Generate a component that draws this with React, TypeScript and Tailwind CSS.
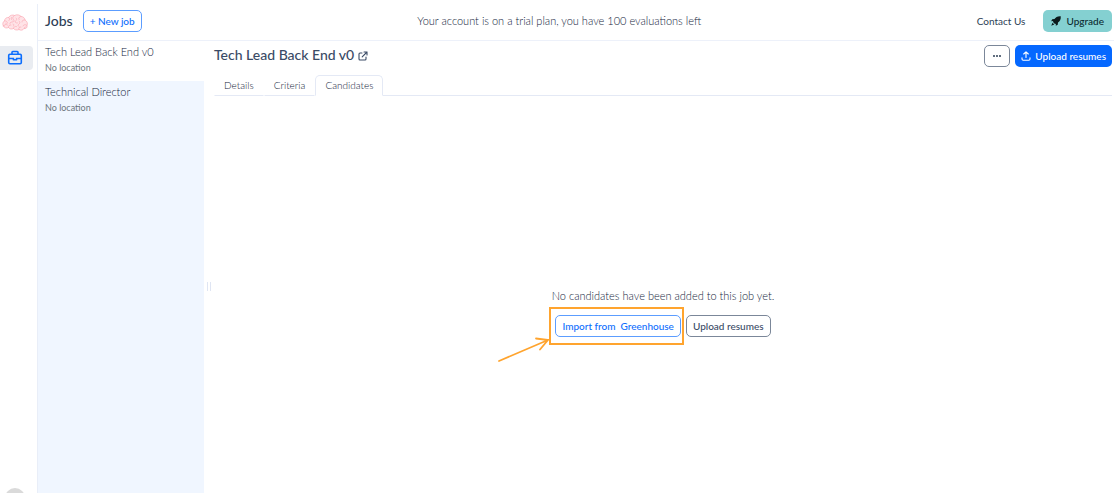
import { useState } from "react";

const jobs = [
    { id: 1, title: "Tech Lead Back End v0", location: "No location" },
    { id: 2, title: "Technical Director", location: "No location" },
];

const tabs = ["Details", "Criteria", "Candidates"];

function BrainLogo() {
    return (
        <svg viewBox="0 0 52 34" className="h-[17px] w-[26px]" fill="#ffe3e7" stroke="#fba9b4" strokeWidth="1.3" strokeLinecap="round" strokeLinejoin="round">
            <path d="M3 24C0 20 2 15 5 14C5 9 10 6 13 7C16 2 22 1 25 3C30 0 36 2 38 5C43 5 46 9 46 12C50 14 52 19 50 23C51 28 47 30 44 29C42 33 37 33 34 31C30 33 25 32 23 29C19 31 15 30 13 27C9 29 4 28 3 24Z" />
            <path fill="none" d="M5 14C8 13 11 15 11 18M13 7C16 8 16 11 14 13M3 24C5 21 8 20 11 22M13 27C12 24 15 21 18 22M25 3C22 5 20 8 23 11C25 13 24 16 20 16C17 16 15 18 16 20M38 5C35 5 32 8 34 11M28 8C31 10 29 13 27 14C25 16 28 19 31 18M46 12C43 11 39 13 40 16M50 23C47 20 43 21 42 24M34 31C32 28 35 25 38 26M23 29C23 26 26 24 29 25M34 14C37 16 36 19 33 21C31 22 32 24 34 25M44 29C44 27 46 26 47 26M19 7C18 9 18 11 20 12M8 18C9 18 9 19 8 20M22 20C24 20 24 22 23 24" />
        </svg>
    );
}

function BriefcaseIcon() {
    return (
        <svg viewBox="0 0 16 16" className="size-4" fill="none" stroke="#0d6efd" strokeWidth="1.6" strokeLinejoin="round">
            <rect x="1.7" y="4.2" width="12.6" height="9.6" rx="1.2" />
            <path d="M5 4V2.3Q5 1.5 5.8 1.5H10.2Q11 1.5 11 2.3V4M2 8.5H6.4M9.6 8.5H14M6.4 7.7V9.8H9.6V7.7" />
        </svg>
    );
}

function OpenIcon() {
    return (
        <svg viewBox="0 0 10 10" className="size-[10px]" fill="none" stroke="currentColor" strokeWidth="1.1" strokeLinecap="round" strokeLinejoin="round">
            <path d="M4 2H2Q1 2 1 3V8Q1 9 2 9H7Q8 9 8 8V6M6 1H9V4M9 1L4.2 5.8" />
        </svg>
    );
}

function RocketIcon() {
    return (
        <svg viewBox="0 0 20 20" className="size-[10px]" fill="#0b1a1c">
            <path d="M19.5.5C13 0 9.5 2.5 7 6L2.5 6.5L.3 10.5L4.5 10.2L4 12L8 16L9.8 15.5L9.5 19.7L13.5 17.5L14 13C17.5 10.5 20 7 19.5.5Z" />
            <path d="M3 13.5L.5 19.5L6.5 17Z" />
        </svg>
    );
}

function UploadIcon() {
    return (
        <svg viewBox="0 0 10 10" className="size-[10px]" fill="none" stroke="currentColor" strokeWidth="1.1" strokeLinecap="round" strokeLinejoin="round">
            <path d="M5 6.5V1M2.7 3L5 .8L7.3 3M1 6.8V8Q1 9.2 2.2 9.2H7.8Q9 9.2 9 8V6.8" />
        </svg>
    );
}

export default function App() {
    const [activeJob, setActiveJob] = useState(1);
    const [activeTab, setActiveTab] = useState("Candidates");

    return (
        <div className="flex h-screen overflow-hidden bg-white font-['Lato',sans-serif] text-[11px] text-[#14243c]">
            {/* Icon rail */}
            <aside className="flex w-[38px] shrink-0 flex-col pt-1">
                <div className="flex min-h-0 flex-1 flex-col border-r border-[#e9eef8]">
                    <a href="#" aria-label="Home" className="ml-[2px] mt-[10px]">
                        <BrainLogo />
                    </a>
                    <a href="#jobs" aria-label="Jobs" className="mr-1 mt-[15px] flex h-6 items-center rounded-r-[4px] bg-[#e9ecf1] pl-[7px]">
                        <BriefcaseIcon />
                    </a>
                    <div className="mt-auto h-[5px] overflow-hidden pl-[5px]">
                        <div className="size-5 rounded-full bg-[#dadada]" />
                    </div>
                </div>
            </aside>

            <div className="flex min-w-0 flex-1 flex-col">
                {/* Top bar */}
                <header className="flex h-[41px] shrink-0 items-center justify-between border-b border-[#edf1fa] pl-[7px] pr-[2px] pt-[2px]">
                    <div className="flex items-center gap-[10px]">
                        <h1 className="text-sm font-medium text-[#2c3e55]">Jobs</h1>
                        <button className="h-[22px] rounded-[5px] border border-[#5c9dff] px-[6px] text-[10px] font-medium text-[#0d6efd]">+ New job</button>
                    </div>
                    <p className="font-light">Your account is on a trial plan, you have 100 evaluations left</p>
                    <div className="flex items-center gap-[18px]">
                        <a href="#contact" className="text-[10px] text-[#2c3e55]">Contact Us</a>
                        <button className="flex h-[22px] items-center gap-[5px] rounded-[5px] bg-[#84d0d1] px-2 text-[10px] font-medium text-[#0b2a30]">
                            <RocketIcon />
                            Upgrade
                        </button>
                    </div>
                </header>

                <div className="flex min-h-0 flex-1">
                    {/* Job list */}
                    <nav className="w-[166px] shrink-0 bg-[#f0f6ff]">
                        {jobs.map((job) => (
                            <button
                                key={job.id}
                                onClick={() => setActiveJob(job.id)}
                                className={`block h-10 w-full px-[7px] pb-[2px] text-left ${activeJob === job.id ? "bg-white" : ""}`}
                            >
                                <span className="block text-[11px] font-light leading-4">{job.title}</span>
                                <span className="block text-[9px] leading-4 text-[#6c757d]">{job.location}</span>
                            </button>
                        ))}
                    </nav>

                    {/* Resize handle */}
                    <div className="flex w-[10px] shrink-0 items-center justify-center pt-[38px]">
                        <div className="h-[9px] w-1 border-x border-[#dfe5f3]" />
                    </div>

                    <main className="flex min-w-0 flex-1 flex-col pr-[2px]">
                        <div className="flex h-[30px] shrink-0 items-center justify-between">
                            <h2 className="flex items-center gap-[4px] pb-[2px] text-sm font-medium text-[#3a4b66]">
                                Tech Lead Back End v0
                                <a href="#open" aria-label="Open job" className="pt-[2px]">
                                    <OpenIcon />
                                </a>
                            </h2>
                            <div className="flex gap-[5px]">
                                <button aria-label="More actions" className="flex h-[22px] w-[26px] items-center justify-center gap-px rounded-[5px] border border-[#7b8799]">
                                    <span className="size-[2px] rounded-full bg-[#2c3e55]" />
                                    <span className="size-[2px] rounded-full bg-[#2c3e55]" />
                                    <span className="size-[2px] rounded-full bg-[#2c3e55]" />
                                </button>
                                <button className="flex h-[22px] items-center gap-[4px] rounded-[5px] bg-[#0568ff] px-[6px] text-[10px] font-medium text-white">
                                    <UploadIcon />
                                    Upload resumes
                                </button>
                            </div>
                        </div>

                        <div role="tablist" className="mt-1 flex h-[21px] shrink-0">
                            {tabs.map((tab) => (
                                <button
                                    key={tab}
                                    role="tab"
                                    aria-selected={activeTab === tab}
                                    onClick={() => setActiveTab(tab)}
                                    className={`border px-[9px] text-[10px] font-light ${activeTab === tab ? "rounded-t-[5px] border-[#e4e9f5] border-b-white" : "border-transparent border-b-[#e4e9f5]"}`}
                                >
                                    {tab}
                                </button>
                            ))}
                            <div className="flex-1 border-b border-[#e4e9f5]" />
                        </div>

                        {/* Empty state */}
                        <section className="flex flex-1 flex-col items-center justify-center gap-[11px] pt-9">
                            <p className="font-light leading-4">No candidates have been added to this job yet.</p>
                            <div className="flex gap-[5px]">
                                <div className="relative">
                                    <button className="flex h-[22px] items-center gap-[5px] rounded-[5px] border border-[#5c9dff] px-[6px] text-[10px] font-medium text-[#0d6efd]">
                                        <span>Import from</span>
                                        <span>Greenhouse</span>
                                    </button>
                                    <div className="pointer-events-none absolute -bottom-2 -left-[6px] -right-[3px] -top-2 border-2 border-[#ffa42e]" />
                                    <svg viewBox="0 0 52 25" className="pointer-events-none absolute -left-[57px] top-[22px] h-[25px] w-[52px]" fill="none" stroke="#ffa42e" strokeWidth="1.8" strokeLinecap="round">
                                        <path d="M1 24L50 3M38 1.5L50 3L42 12.5" />
                                    </svg>
                                </div>
                                <button className="h-[22px] rounded-[5px] border border-[#7b8799] px-[6px] text-[10px] font-medium text-[#3a4b66]">Upload resumes</button>
                            </div>
                        </section>
                    </main>
                </div>
            </div>
        </div>
    );
}
